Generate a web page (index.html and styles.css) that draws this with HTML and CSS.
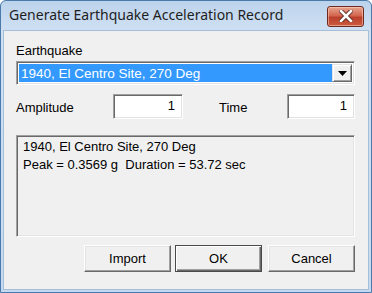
FILE: index.html
```html
<!DOCTYPE html>
<html lang="en">
<head>
    <meta charset="utf-8">
    <title>Generate Earthquake Acceleration Record</title>
    <link rel="stylesheet" href="styles.css">
</head>
<body>
    <div class="window">
        <div class="titlebar">
            <span class="caption">Generate Earthquake Acceleration Record</span>
            <button class="close" type="button" aria-label="Close">
                <svg width="14" height="12" viewBox="0 0 14 12">
                    <path d="M2 1 L12 11 M12 1 L2 11" stroke="#5a2a20" stroke-width="4.4" stroke-linecap="square"/>
                    <path d="M2 1 L12 11 M12 1 L2 11" stroke="#fff" stroke-width="2.6" stroke-linecap="square"/>
                </svg>
            </button>
        </div>

        <div class="client">
            <label class="label">Earthquake</label>
            <div class="combo">
                <span class="combo-value">1940, El Centro Site, 270 Deg</span>
                <span class="combo-btn">
                    <svg width="9" height="5" viewBox="0 0 9 5"><path d="M0 0 H9 L4.5 5 Z" fill="#000"/></svg>
                </span>
            </div>

            <div class="fields">
                <span class="label">Amplitude</span>
                <span class="edit">1</span>
                <span class="label">Time</span>
                <span class="edit">1</span>
            </div>

            <div class="info">
                <div>1940, El Centro Site, 270 Deg</div>
                <div>Peak = 0.3569 g&nbsp; Duration = 53.72 sec</div>
            </div>

            <div class="buttons">
                <button class="btn" type="button">Import</button>
                <button class="btn btn--default" type="button">OK</button>
                <button class="btn" type="button">Cancel</button>
            </div>
        </div>
    </div>
</body>
</html>
```

FILE: styles.css
```css
:root {
    --ff: 'Liberation Sans', Arial, sans-serif;
    --face: #f0f0f0;
}

body {
    margin: 0;
    font-family: var(--ff);
    font-size: 13px;
    color: #000;
}

.window {
    width: 372px;
    height: 293px;
    box-sizing: border-box;
    border: 1px solid #4a7aab;
    border-radius: 6px 6px 0 0;
    background: linear-gradient(#bcd3ec, #cfe0f3 30px, #c5daf2);
    padding: 0 2px 2px;
    display: flex;
    flex-direction: column;
}

.titlebar {
    height: 29px;
    display: flex;
    align-items: center;
    justify-content: space-between;
    padding: 0 5px 0 6px;
}
.caption {
    font-family: 'Noto Sans', sans-serif;
    font-size: 14px;
    color: #1e1e1e;
    margin-top: -2px;
}
.close {
    width: 37px;
    height: 21px;
    margin-top: 1px;
    border: 1px solid #6e2a1e;
    border-radius: 3px;
    background: linear-gradient(#e8a58f, #d46650 45%, #bb402c 55%, #cc5a40);
    box-shadow: inset 0 0 0 1px rgba(255, 220, 200, 0.5);
    padding: 0;
    display: flex;
    align-items: center;
    justify-content: center;
}

.client {
    flex: 1;
    background: var(--face);
    border: 1px solid #a6bfd9;
    padding: 11px 13px 0 12px;
    display: flex;
    flex-direction: column;
}

.label {
    display: block;
    height: 17px;
    line-height: 17px;
}

.combo {
    margin-top: 2px;
    height: 24px;
    box-sizing: border-box;
    border: 1px solid;
    border-color: #a0a0a0 #fff #fff #a0a0a0;
    box-shadow: inset 1px 1px 0 #696969, inset -1px -1px 0 #e3e3e3;
    background: #fff;
    padding: 2px;
    display: flex;
}
.combo-value {
    flex: 1;
    background: #3399ff;
    color: #fff;
    font-size: 13.5px;
    line-height: 20px;
    padding-left: 2px;
}
.combo-btn {
    width: 20px;
    box-sizing: border-box;
    background: var(--face);
    border: 1px solid;
    border-color: #e3e3e3 #696969 #696969 #e3e3e3;
    box-shadow: inset 1px 1px 0 #fff, inset -1px -1px 0 #a0a0a0;
    display: flex;
    align-items: center;
    justify-content: center;
}

.fields {
    margin-top: 9px;
    display: grid;
    grid-template-columns: 97px 70px 1fr 68px;
    align-items: end;
}
.fields .label {
    margin-bottom: 3px;
}
.fields .label + .edit + .label {
    padding-left: 36px;
}

.edit {
    height: 25px;
    box-sizing: border-box;
    border: 1px solid;
    border-color: #a0a0a0 #fff #fff #a0a0a0;
    box-shadow: inset 1px 1px 0 #696969, inset -1px -1px 0 #e3e3e3;
    background: #fff;
    text-align: right;
    padding: 2px 7px 0 0;
    line-height: 17px;
}

.info {
    margin-top: 16px;
    height: 102px;
    box-sizing: border-box;
    border: 1px solid;
    border-color: #a0a0a0 #fff #fff #a0a0a0;
    box-shadow: inset 1px 1px 0 #696969, inset -1px -1px 0 #e3e3e3;
    padding: 2px 6px;
    line-height: 18px;
}

.buttons {
    margin-top: 8px;
    display: flex;
    justify-content: flex-end;
    gap: 4px;
}
.btn {
    width: 87px;
    height: 27px;
    font-family: var(--ff);
    font-size: 13px;
    color: #000;
    background: var(--face);
    border: 1px solid;
    border-color: #fff #696969 #696969 #fff;
    box-shadow: inset -1px -1px 0 #a0a0a0, inset 1px 1px 0 #e3e3e3;
    padding: 0;
}
.btn--default {
    border-color: #4a4a4a;
    box-shadow: inset 1px 1px 0 #fff, inset -1px -1px 0 #696969, inset -2px -2px 0 #a0a0a0;
}
.btn + .btn--default + .btn {
    margin-left: 2px;
}
```
